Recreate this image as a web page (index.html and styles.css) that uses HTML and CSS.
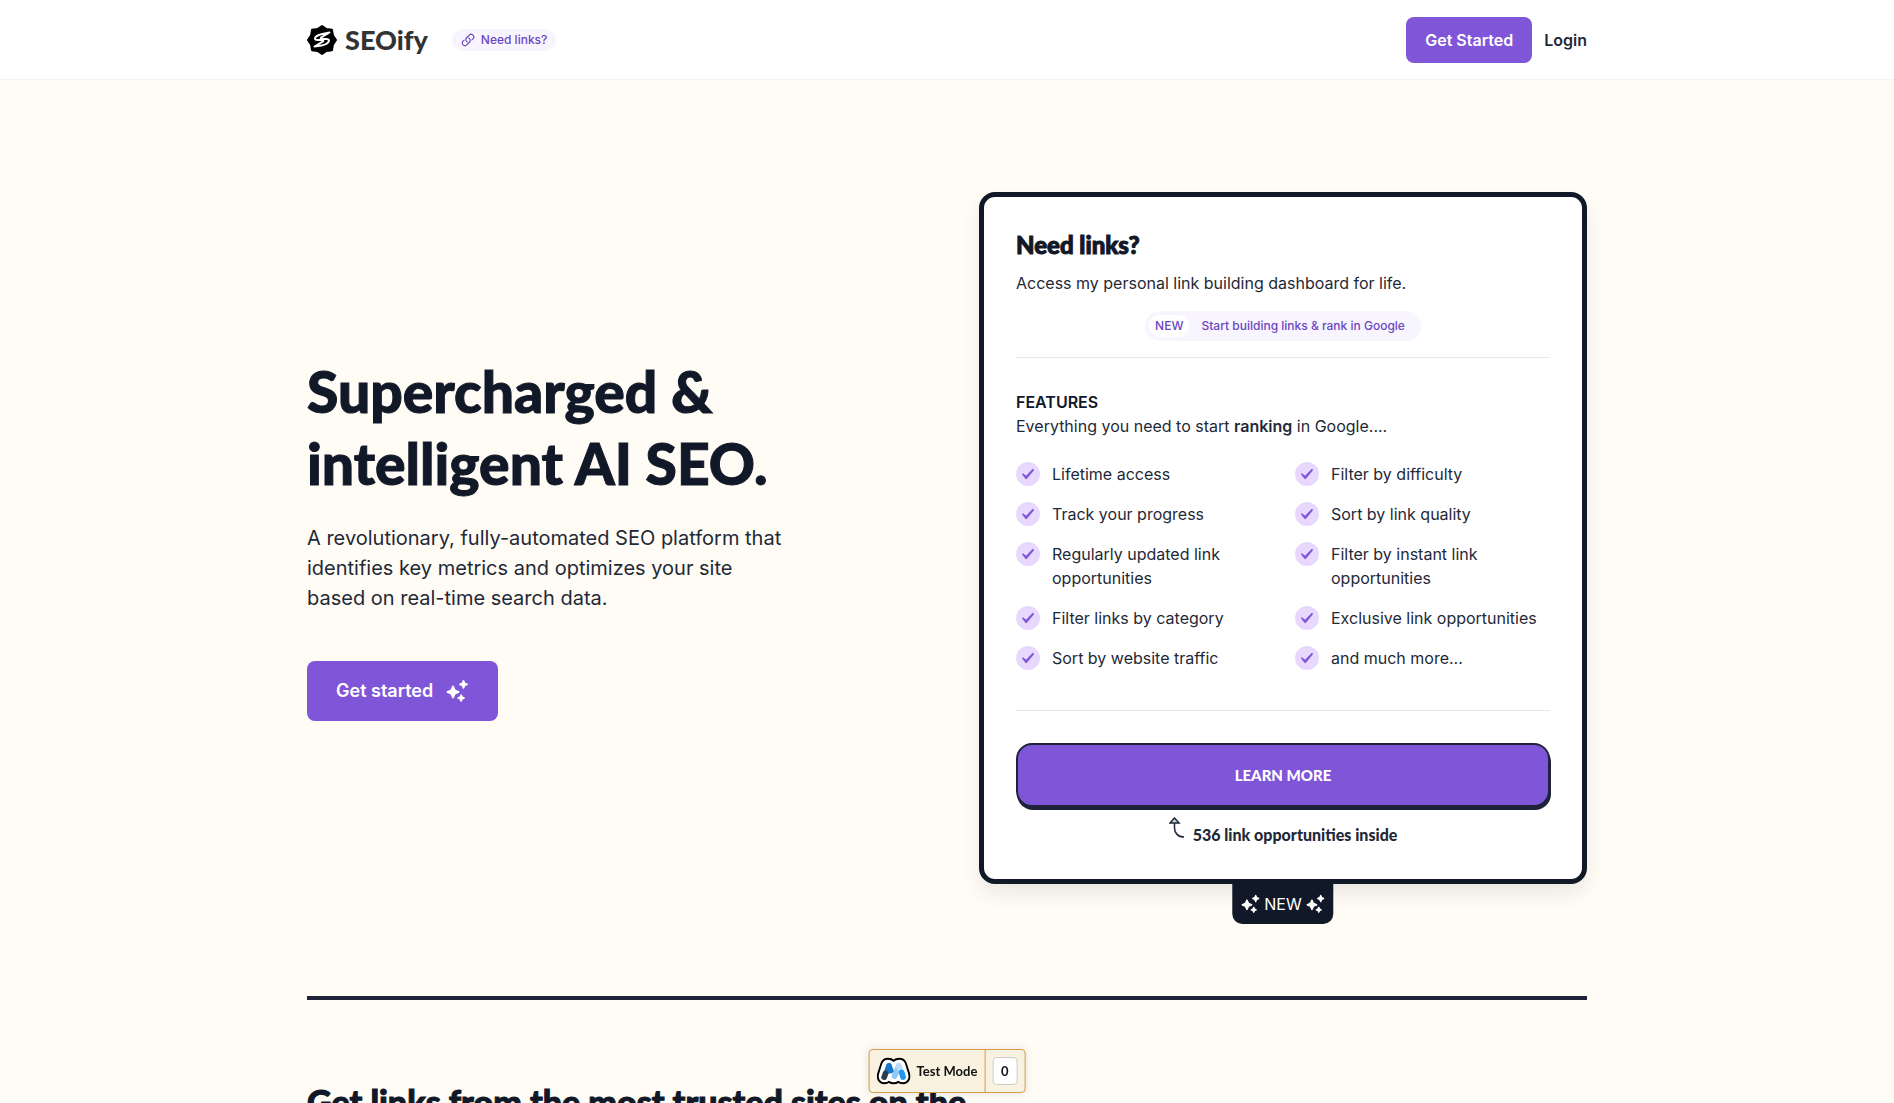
FILE: index.html
```
<!DOCTYPE html>
<html lang="en">
  <head>
    <meta charset="UTF-8" />
    <meta name="viewport" content="width=device-width, initial-scale=1.0" />
    <title>SEOify</title>
    <link rel="stylesheet" href="styles.css">
  </head>
  <body>
    <!-- Shared icons -->
    <svg class="sprite" aria-hidden="true">
      <symbol id="sparkles" viewBox="0 0 24 24">
        <path d="M8 6.500c.5 0 .8.300 1 .8l1.100 2.600c.2.500.500.800 1 1l2.600 1.100c1 .4 1 1.600 0 2l-2.600 1.100c-.5.200-.8.500-1 1l-1.100 2.600c-.4 1-1.600 1-2 0l-1.100-2.600c-.2-.5-.5-.8-1-1L2.300 14c-1-.4-1-1.600 0-2l2.600-1.100c.5-.2.8-.5 1-1L7 7.300c.2-.5.5-.8 1-.8z" />
        <path d="M18.500 1c.4 0 .6.200.8.600l.9 2.100 2.100.9c.8.300.8 1.300 0 1.600l-2.100.9-.9 2.100c-.3.800-1.300.8-1.600 0l-.9-2.100-2.100-.9c-.8-.3-.8-1.300 0-1.600l2.100-.9.900-2.100c.2-.4.400-.6.800-.6z" />
        <path d="M16.200 15.200c.3 0 .6.200.7.500l.8 1.700 1.700.8c.7.300.7 1.200 0 1.500l-1.700.8-.8 1.700c-.3.700-1.200.7-1.500 0l-.8-1.700-1.700-.8c-.7-.3-.7-1.200 0-1.500l1.700-.8.8-1.700c.2-.3.500-.5.800-.5z" />
      </symbol>
      <symbol id="check" viewBox="0 0 24 24">
        <path d="M17.600 7.200c.4.300.5.800.2 1.200l-6.900 8.400c-.4.500-1.100.5-1.500 0l-3.100-4c-.3-.4-.2-.9.200-1.200.4-.2.900-.2 1.200.1l2.400 2.100 6.200-6.500c.4-.4.900-.4 1.300-.1z" />
      </symbol>
    </svg>

    <header class="header">
      <div class="container header-inner">
        <div class="header-left">
          <a class="logo" href="#">
            <svg class="logo-mark" viewBox="0 0 30 30" aria-hidden="true">
              <path stroke="#000" stroke-width="2" stroke-linejoin="round" d="M15 1l4.500 3 5.500.800.900 5.500L29 15l-3.100 4.700-.9 5.500-5.500.8L15 29l-4.500-3-5.500-.8-.9-5.500L1 15l3.100-4.700.9-5.500 5.500-.8z" />
              <path fill="none" stroke="#fff" stroke-width="2" stroke-linejoin="round" stroke-linecap="round" d="M22.500 7.500l-7 1.500c-4.500 1-7.500 2.800-7.500 4.500 0 1.200 1 1.500 3 1.500h4c2 0 1.500 1.300 0 2L7.500 21.500l7-1c4.500-.7 7.500-3 7.500-5 0-1.300-1-1.500-3-1.500h-4c-2 0-1.500-1.300 0-2z" />
            </svg>
            <span>SEOify</span>
          </a>
          <a class="pill" href="#">
            <svg class="pill-icon" viewBox="0 0 24 24" aria-hidden="true">
              <path d="M13.200 8.700a4.500 4.500 0 0 1 1.200 7.200l-4.500 4.500a4.500 4.500 0 0 1-6.400-6.400l1.800-1.700" />
              <path d="M18.700 11.700l1.800-1.700a4.500 4.500 0 0 0-6.400-6.400L9.600 8.100a4.500 4.500 0 0 0 1.200 7.200" />
            </svg>
            Need links?
          </a>
        </div>
        <nav class="nav">
          <a class="btn" href="#">Get Started</a>
          <a class="login" href="#">Login</a>
        </nav>
      </div>
    </header>

    <main class="container">
      <section class="hero">
        <div class="intro">
          <h1>Supercharged &amp;<br />intelligent AI SEO.</h1>
          <p>A revolutionary, fully-automated SEO platform that identifies key metrics and optimizes your site based on real-time search data.</p>
          <a class="btn btn-large" href="#">
            Get started
            <svg class="sparkles" aria-hidden="true"><use href="#sparkles" /></svg>
          </a>
        </div>

        <div class="card">
          <h2>Need links?</h2>
          <p class="card-text">Access my personal link building dashboard for life.</p>
          <a class="tag" href="#">
            <span class="tag-new">NEW</span>
            <span>Start building links &amp; rank in Google</span>
          </a>
          <div class="features">
            <h3>FEATURES</h3>
            <p>Everything you need to start <strong>ranking</strong> in Google....</p>
            <ul class="feature-list">
              <li><svg class="check" aria-hidden="true"><use href="#check" /></svg>Lifetime access</li>
              <li><svg class="check" aria-hidden="true"><use href="#check" /></svg>Filter by difficulty</li>
              <li><svg class="check" aria-hidden="true"><use href="#check" /></svg>Track your progress</li>
              <li><svg class="check" aria-hidden="true"><use href="#check" /></svg>Sort by link quality</li>
              <li><svg class="check" aria-hidden="true"><use href="#check" /></svg>Regularly updated link opportunities</li>
              <li><svg class="check" aria-hidden="true"><use href="#check" /></svg>Filter by instant link opportunities</li>
              <li><svg class="check" aria-hidden="true"><use href="#check" /></svg>Filter links by category</li>
              <li><svg class="check" aria-hidden="true"><use href="#check" /></svg>Exclusive link opportunities</li>
              <li><svg class="check" aria-hidden="true"><use href="#check" /></svg>Sort by website traffic</li>
              <li><svg class="check" aria-hidden="true"><use href="#check" /></svg>and much more...</li>
            </ul>
          </div>
          <button class="learn-more" type="button">LEARN MORE</button>
          <p class="note">
            <svg class="note-arrow" viewBox="0 0 16 22" aria-hidden="true">
              <path d="M5.500 6v5c0 5 3.500 9 9.500 9" />
              <path fill="#d1d5db" d="M1 6l4.500-5L10 6z" />
            </svg>
            536 link opportunities inside
          </p>
          <div class="badge">
            <svg class="badge-icon" aria-hidden="true"><use href="#sparkles" /></svg>
            NEW
            <svg class="badge-icon" aria-hidden="true"><use href="#sparkles" /></svg>
          </div>
        </div>
      </section>

      <section class="sites">
        <h2>Get links from the most trusted sites on the</h2>
      </section>
    </main>

    <div class="test-mode">
      <div class="test-mode-label">
        <svg class="test-mode-logo" viewBox="0 0 36 28" aria-hidden="true">
          <path fill="#fff" stroke="#000" stroke-width="2" d="M12 1c2.500 0 4.500.8 6 2.200C19.500 1.800 21.500 1 24 1c3.500 0 5.800 1.800 7 5l3.300 10.500C36 22 33 27 28 27c-2.500 0-4-.5-5-1.500-1.500 1-3 1.500-5 1.500s-3.500-.5-5-1.500c-1 1-2.500 1.500-5 1.500-5 0-8-5-6.300-10.500L5 6c1.200-3.200 3.500-5 7-5z" />
          <path stroke="#90caf9" stroke-width="6" stroke-linecap="round" d="M23.500 8.500L19 19.500" />
          <path stroke="#bbdefb" stroke-width="6" stroke-linecap="round" d="M23.500 8.500l1 3" />
          <path stroke="#1677c8" stroke-width="6" stroke-linecap="round" d="M13 8.500l-2 6M13 8.500l2 5" />
          <path stroke="#2d3b4d" stroke-width="6" stroke-linecap="round" d="M9.500 16.500l-1.500 4" />
          <path stroke="#2196f3" stroke-width="6" stroke-linecap="round" d="M26.500 15.500l1.500 5" />
        </svg>
        Test Mode
      </div>
      <div class="test-mode-count"><span>0</span></div>
    </div>
  </body>
</html>
```
FILE: styles.css
```
* {
  margin: 0;
  padding: 0;
  box-sizing: border-box;
}

body {
  font-family: Inter, "Liberation Sans", sans-serif;
  font-size: 16px;
  line-height: 24px;
  color: #1f2937;
  background: #fffcf5;
  height: 100vh;
  overflow: hidden;
}

a {
  color: inherit;
  text-decoration: none;
}

h1,
h2 {
  font-family: Lato, "Open Sans", sans-serif;
  font-weight: 900;
  color: #111827;
  -webkit-text-stroke: 1px #111827;
}

.sprite {
  display: none;
}

.container {
  width: 100%;
  max-width: 1328px;
  margin: 0 auto;
  padding: 0 24px;
}

/* Header */
.header {
  background: #fff;
  border-bottom: 1px solid #f3f4f6;
}

.header-inner {
  display: flex;
  align-items: center;
  justify-content: space-between;
  padding-top: 17px;
  padding-bottom: 16px;
}

.header-left {
  display: flex;
  align-items: center;
  gap: 24px;
}

.logo {
  display: flex;
  align-items: center;
  gap: 8px;
  font-family: Lato, "Open Sans", sans-serif;
  font-size: 27px;
  font-weight: 900;
  color: #333;
}

.logo-mark {
  width: 30px;
  height: 30px;
}

.pill {
  display: flex;
  align-items: center;
  gap: 6px;
  height: 22px;
  padding: 0 9px;
  border-radius: 11px;
  background: #f8f5ff;
  color: #6b46c1;
  font-size: 12px;
  font-weight: 500;
}

.pill-icon {
  width: 14px;
  height: 14px;
  fill: none;
  stroke: currentColor;
  stroke-width: 2;
  stroke-linecap: round;
}

.nav {
  display: flex;
  align-items: center;
  gap: 12px;
  font-weight: 600;
}

.btn {
  display: inline-flex;
  align-items: center;
  gap: 12px;
  padding: 11px 19px;
  border-radius: 8px;
  background: #8056d9;
  color: #fff;
  font-weight: 600;
}

.btn-large {
  padding: 18px 29px;
  font-size: 18px;
}

.sparkles {
  width: 24px;
  height: 24px;
  fill: currentColor;
}

/* Hero */
.hero {
  display: grid;
  grid-template-columns: 1fr 1fr;
  align-items: center;
  gap: 64px;
  padding: 112px 0;
  border-bottom: 4px solid #1e2339;
}

.intro h1 {
  font-size: 57px;
  line-height: 72px;
  margin-bottom: 24px;
}

.intro p {
  max-width: 480px;
  font-size: 20px;
  line-height: 30px;
  margin-bottom: 48px;
}

/* Card */
.card {
  position: relative;
  padding: 32px;
  background: #fff;
  border: 5px solid #111827;
  border-radius: 16px;
  box-shadow: 0 10px 20px rgba(0, 0, 0, 0.08);
}

.card h2 {
  font-size: 24px;
  line-height: 32px;
  margin-bottom: 10px;
}

.tag {
  display: flex;
  align-items: center;
  gap: 12px;
  width: fit-content;
  margin: 16px auto;
  padding: 4px 16px 4px 4px;
  border-radius: 15px;
  background: #f8f5ff;
  color: #6b46c1;
  font-size: 12px;
  line-height: 22px;
  font-weight: 500;
}

.tag-new {
  padding: 0 6px;
  border-radius: 11px;
  background: #fff;
}

.features {
  padding: 32px 0 40px;
  border-top: 1px solid #e5e7eb;
  border-bottom: 1px solid #e5e7eb;
}

.features h3 {
  font-size: 16px;
  font-weight: 600;
  color: #111827;
}

.features strong {
  font-weight: 600;
}

.feature-list {
  display: grid;
  grid-template-columns: 1fr 1fr;
  gap: 16px 24px;
  margin-top: 24px;
  list-style: none;
}

.feature-list li {
  display: flex;
  align-items: flex-start;
  gap: 12px;
}

.check {
  flex: none;
  width: 24px;
  height: 24px;
  border-radius: 50%;
  background: #e9d8fd;
  fill: #8056d9;
}

.learn-more {
  display: block;
  width: 100%;
  margin: 32px 0 16px;
  padding: 18px;
  border: 2px solid #1e2339;
  border-radius: 16px;
  background: #8056d9;
  box-shadow: 1px 3px 0 #1e2339;
  color: #fff;
  font-family: Lato, "Open Sans", sans-serif;
  font-size: 15px;
  font-weight: 900;
  line-height: 24px;
  cursor: pointer;
}

.note {
  display: flex;
  justify-content: center;
  gap: 8px;
  font-family: Lato, "Open Sans", sans-serif;
  font-weight: 900;
}

.note-arrow {
  width: 16px;
  height: 22px;
  margin-top: -6px;
  fill: none;
  stroke: #1f2937;
  stroke-width: 1.5;
}

/* Tab hanging under the card */
.badge {
  position: absolute;
  top: 100%;
  left: 50%;
  transform: translateX(-50%);
  display: flex;
  align-items: center;
  gap: 4px;
  padding: 13px 8px 8px;
  border-radius: 0 0 10px 10px;
  background: #111827;
  color: #fff;
}

.badge-icon {
  width: 20px;
  height: 20px;
  fill: #fff;
}

/* Trusted sites */
.sites {
  padding-top: 80px;
}

.sites h2 {
  font-size: 34px;
  line-height: 44px;
}

/* Test mode widget */
.test-mode {
  position: fixed;
  bottom: 10px;
  left: 50%;
  transform: translateX(-50%);
  display: flex;
  height: 44px;
  border: 1px solid #d59a4c;
  border-radius: 4px;
  background: #faf2e1;
  box-shadow: 0 0 10px rgba(0, 0, 0, 0.1);
  color: #111;
  font-family: Lato, sans-serif;
  font-size: 13px;
  font-weight: 700;
}

.test-mode-label,
.test-mode-count {
  display: flex;
  align-items: center;
  padding: 0 7px;
}

.test-mode-label {
  gap: 6px;
}

.test-mode-logo {
  width: 34px;
  height: 28px;
  fill: none;
}

.test-mode-count {
  border-left: 1px solid #d59a4c;
}

.test-mode-count span {
  width: 25px;
  border: 1px solid #ccc;
  border-radius: 4px;
  background: #fff;
  line-height: 26px;
  text-align: center;
}

@media (max-width: 900px) {
  body {
    height: auto;
    overflow: visible;
  }

  .hero {
    grid-template-columns: 1fr;
    padding: 48px 0 80px;
  }

  .intro h1 {
    font-size: 40px;
    line-height: 48px;
  }
}
```
